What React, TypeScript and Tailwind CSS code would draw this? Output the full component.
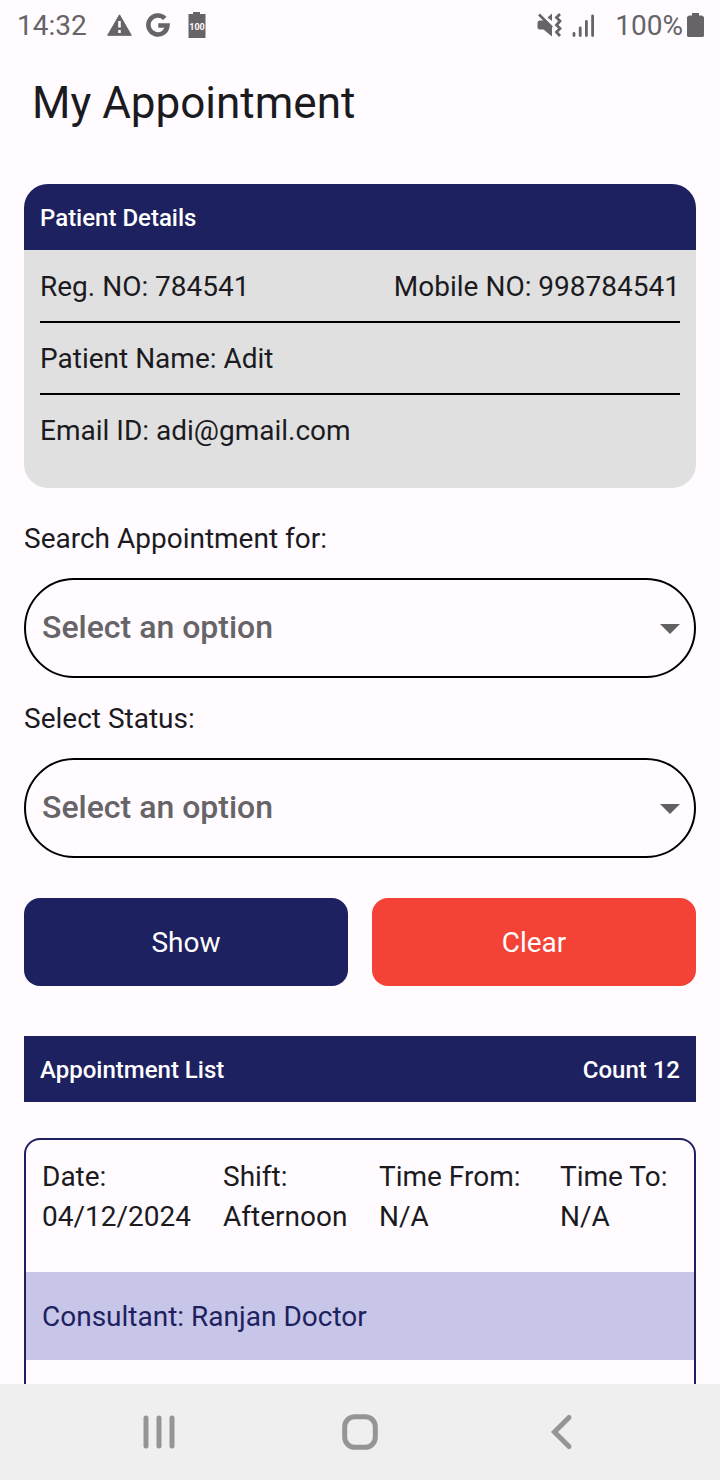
import { useState } from "react";
import type { ReactNode } from "react";

function StatusBar() {
  return (
    <header className="flex h-12 shrink-0 items-center justify-between pt-0.5 pr-4 pl-[17px] text-[28px] leading-none text-[#666467]">
      <div className="flex items-center">
        <span className="pt-0.5">14:32</span>
        <svg className="ml-5 h-[22px] w-[25px]" viewBox="0 0 25 22" aria-hidden="true">
          <path d="M12.5 0.8 24.3 21.3H0.7Z" fill="currentColor" stroke="currentColor" strokeLinejoin="round" />
          <path d="M12.5 7v6.5M12.5 16v3" stroke="#fffbff" strokeWidth="2.6" />
        </svg>
        <svg className="ml-3.5 h-6 w-6" viewBox="0 0 24 24" aria-hidden="true">
          <path d="M18.8 5.4A9.5 9.5 0 1 0 21.4 12.5H12.3" fill="none" stroke="currentColor" strokeWidth="4.6" />
        </svg>
        <svg className="ml-[18px] h-[26px] w-[18px]" viewBox="0 0 18 26" aria-hidden="true">
          <path d="M5 0h7v2h5.5V26H0.5V2H5Z" fill="currentColor" />
          <text x="9" y="17.5" textAnchor="middle" fontSize="9" fontWeight="700" fill="#fffbff">
            100
          </text>
        </svg>
      </div>
      <div className="flex items-center">
        <svg className="h-6 w-[25px]" viewBox="0 0 25 24" aria-hidden="true">
          <path d="M0.5 9.2 2 7.5H7.5L15 14.5V23.5L6.5 16.5H2L0.5 15Z" fill="currentColor" />
          <path d="M2 1.5 15 14.5" stroke="currentColor" strokeWidth="2.6" />
          <path d="M15 0.5V8L10.5 4.5Z" fill="currentColor" />
          <path d="M23 1 19.5 4.5 23 8 19.5 12 23 15.5 19.5 19 23 23" fill="none" stroke="currentColor" strokeWidth="2.8" />
        </svg>
        <svg className="ml-[9px] h-6 w-6" viewBox="0 0 24 24" aria-hidden="true">
          <path d="M3 20.5v2M9.2 15v7.5M15.4 8.5v14M21.6 3v19.5" stroke="currentColor" strokeWidth="2.8" strokeLinecap="round" />
        </svg>
        <span className="ml-5 pt-0.5">100%</span>
        <svg className="ml-1 h-6 w-[17px]" viewBox="0 0 17 24" aria-hidden="true">
          <path d="M5 0h7v2.5h3L17 4v19L16 24H1L0 23V4L2 2.5H5Z" fill="currentColor" />
        </svg>
      </div>
    </header>
  );
}

function DetailRow({ children }: { children: ReactNode }) {
  return (
    <div className="flex h-[72px] items-center justify-between border-b-2 border-black pt-0.5 last:border-transparent">
      {children}
    </div>
  );
}

function PatientDetails() {
  return (
    <section className="overflow-hidden rounded-3xl bg-[#e0e0e0]">
      <h2 className="flex h-[66px] items-center bg-[#1e2160] px-4 pt-0.5 text-2xl font-medium text-white">Patient Details</h2>
      <div className="px-4 pt-px pb-[21px]">
        <DetailRow>
          <span>Reg. NO: 784541</span>
          <span>Mobile NO: 998784541</span>
        </DetailRow>
        <DetailRow>
          <span>Patient Name: Adit</span>
        </DetailRow>
        <DetailRow>
          <span>Email ID: adi@gmail.com</span>
        </DetailRow>
      </div>
    </section>
  );
}

function SelectField({ id, label }: { id: string; label: string }) {
  const [value, setValue] = useState("");
  return (
    <div className="flex flex-col gap-[19px]">
      <label htmlFor={id} className="leading-10">
        {label}
      </label>
      <div className="grid">
        <select
          id={id}
          value={value}
          onChange={(event) => setValue(event.target.value)}
          className="col-start-1 row-start-1 h-[100px] w-full appearance-none rounded-full border-2 border-black bg-transparent pr-12 pb-0.5 pl-4 text-[32px] font-medium text-[#666467]"
        >
          <option value="">Select an option</option>
        </select>
        <svg className="pointer-events-none col-start-1 row-start-1 mt-0.5 mr-4 h-2.5 w-5 self-center justify-self-end" viewBox="0 0 20 10" aria-hidden="true">
          <path d="M0 0h20L10 10Z" fill="#616161" />
        </svg>
      </div>
    </div>
  );
}

const appointment = [
  { label: "Date:", value: "04/12/2024" },
  { label: "Shift:", value: "Afternoon" },
  { label: "Time From:", value: "N/A" },
  { label: "Time To:", value: "N/A" },
];

function AppointmentCard() {
  return (
    <article className="mt-9 rounded-2xl border-2 border-[#1e2160] pb-16">
      <dl className="grid grid-cols-[181fr_156fr_181fr_118fr] px-4 pt-[17px] pb-[35px] leading-10 whitespace-nowrap">
        {appointment.map((item) => (
          <div key={item.label}>
            <dt>{item.label}</dt>
            <dd>{item.value}</dd>
          </div>
        ))}
      </dl>
      <p className="flex h-[88px] items-center bg-[#c7c6e8] px-4 pt-0.5 text-[#1e2160]">Consultant: Ranjan Doctor</p>
    </article>
  );
}

function NavigationBar() {
  return (
    <nav className="flex h-24 shrink-0 items-center justify-between bg-[#efefef] px-[139px] text-[#959595]">
      <button type="button" aria-label="Recent apps">
        <svg className="h-10 w-10" viewBox="0 0 40 40" fill="none" stroke="currentColor" strokeWidth="5" strokeLinecap="round">
          <path d="M7 6v28M20 6v28M33 6v28" />
        </svg>
      </button>
      <button type="button" aria-label="Home">
        <svg className="h-10 w-10" viewBox="0 0 40 40" fill="none" stroke="currentColor" strokeWidth="5">
          <rect x="4.7" y="4.7" width="30.6" height="30.6" rx="10" />
        </svg>
      </button>
      <button type="button" aria-label="Back">
        <svg className="h-10 w-10" viewBox="0 0 40 40" fill="none" stroke="currentColor" strokeWidth="5" strokeLinecap="round">
          <path d="M28 5.5 13.5 20 28 34.5" />
        </svg>
      </button>
    </nav>
  );
}

export default function App() {
  return (
    <div className="flex h-screen flex-col bg-[#fffbff] font-['Roboto',sans-serif] text-[28px] text-[#1b1b1f]">
      <StatusBar />
      <main className="min-h-0 flex-1 overflow-y-auto px-6 [scrollbar-width:none]">
        <h1 className="px-2 pt-[27px] pb-[53px] text-[44px] leading-14">My Appointment</h1>
        <PatientDetails />
        <div className="mt-[31px] flex flex-col gap-[21px]">
          <SelectField id="search-for" label="Search Appointment for:" />
          <SelectField id="status" label="Select Status:" />
        </div>
        <div className="mt-10 grid grid-cols-2 gap-6 text-white">
          <button type="button" className="h-[88px] rounded-2xl bg-[#1e2160] pt-0.5">
            Show
          </button>
          <button type="button" className="h-[88px] rounded-2xl bg-[#f44336] pt-0.5">
            Clear
          </button>
        </div>
        <div className="mt-[50px] flex h-[66px] items-center justify-between bg-[#1e2160] px-4 pt-0.5 text-2xl font-medium text-white">
          <h2>Appointment List</h2>
          <span>Count 12</span>
        </div>
        <AppointmentCard />
      </main>
      <NavigationBar />
    </div>
  );
}
